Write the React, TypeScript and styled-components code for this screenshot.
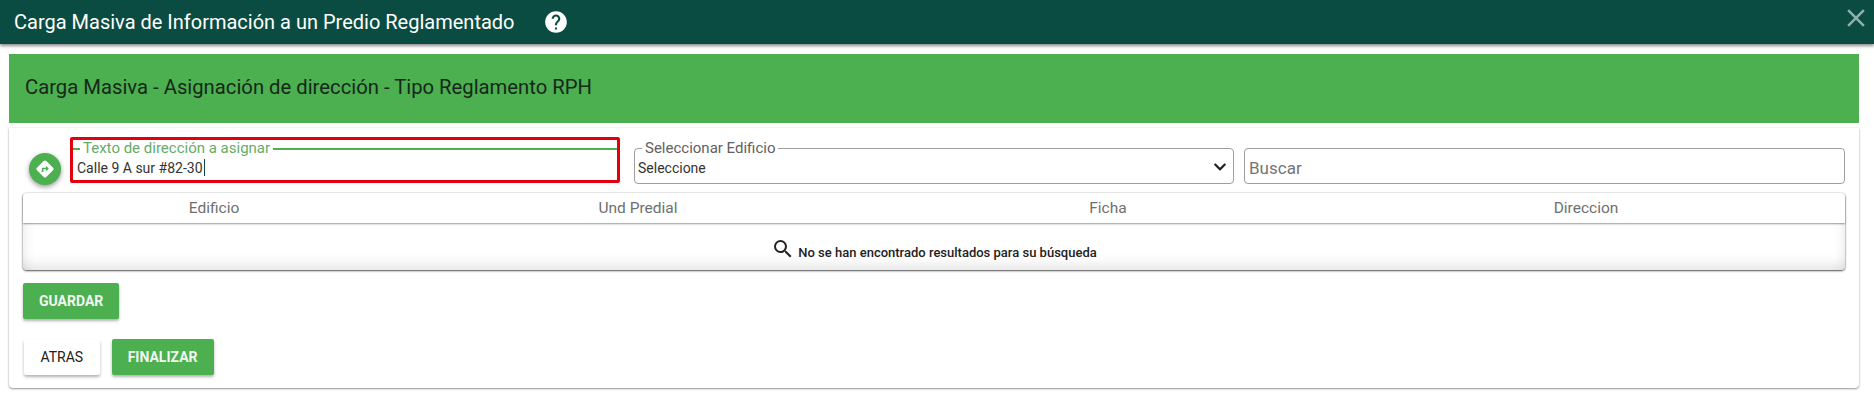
import React from 'react';
import styled, { createGlobalStyle } from 'styled-components';
import { MdClose, MdHelp, MdSearch } from 'react-icons/md';
import { FaChevronDown } from 'react-icons/fa';

const GlobalStyle = createGlobalStyle`
  html, body {
    margin: 0;
    padding: 0;
    background: #fff;
    font-family: Roboto, "Liberation Sans", sans-serif;
  }
`;

const Page = styled.div`
  width: 1874px;
  height: 405px;
  overflow: hidden;
  background: #fff;
`;

const TopBar = styled.header`
  height: 44px;
  background: #0b4c42;
  color: #fff;
  display: flex;
  align-items: center;
  padding: 0 0 0 14px;
  box-shadow: 0 2px 3px rgba(0, 0, 0, 0.45);
  position: relative;
`;

const TopTitle = styled.h1`
  margin: 0;
  font-size: 20px;
  font-weight: 400;
`;

const HelpButton = styled.span`
  display: flex;
  margin-left: 28px;
  font-size: 26px;
`;

const CloseButton = styled.span`
  display: flex;
  margin-left: auto;
  margin-right: 3px;
  margin-top: -9px;
  font-size: 30px;
  color: #8fb0aa;
`;

const Content = styled.main`
  margin: 10px 15px 0 9px;
`;

const Banner = styled.div`
  height: 69px;
  box-sizing: border-box;
  background: #4caf50;
  color: #16281a;
  display: flex;
  align-items: center;
  padding: 0 0 4px 16px;
  font-size: 20.25px;
`;

const Card = styled.section`
  margin-top: 5px;
  height: 260px;
  box-sizing: border-box;
  padding: 0 14px;
  border-radius: 0 0 4px 4px;
  box-shadow: 0 1px 2px rgba(0, 0, 0, 0.4), 0 0 2px rgba(0, 0, 0, 0.1);
  background: #fff;
`;

const FilterRow = styled.div`
  display: flex;
  align-items: flex-end;
  height: 57px;
`;

const RouteIcon = styled.span`
  width: 32px;
  height: 32px;
  flex: none;
  margin: 0 9px 0 6px;
  border-radius: 50%;
  background: #4caf50;
  display: flex;
  align-items: center;
  justify-content: center;
  box-shadow: 0 2px 5px rgba(0, 0, 0, 0.4);
`;

const Highlight = styled.div`
  width: 550px;
  height: 46px;
  flex: none;
  box-sizing: border-box;
  border: 3px solid #e2000f;
  border-radius: 2px;
  margin-bottom: 2px;
  padding-top: 1px;
`;

const Field = styled.fieldset<{ $active?: boolean; $width?: number }>`
  margin: 0;
  box-sizing: border-box;
  width: ${(p) => (p.$width ? `${p.$width}px` : 'auto')};
  border: 1px solid #9e9e9e;
  border-radius: 4px;
  padding: 0 3px;
  height: 43px;
  ${(p) =>
    p.$active &&
    `
    border: none;
    border-top: 2px solid #4caf50;
    border-radius: 0;
    height: 40px;
    padding-left: 4px;
  `}
`;

const FieldLegend = styled.legend<{ $active?: boolean }>`
  padding: 0 3px;
  margin-left: ${(p) => (p.$active ? '3px' : '4px')};
  font-size: 15px;
  line-height: 15px;
  color: ${(p) => (p.$active ? '#66ab69' : '#616161')};
`;

const FieldValue = styled.div`
  font-size: 14px;
  line-height: 20px;
  padding-top: 2px;
  color: #333;
  display: flex;
  align-items: center;
  justify-content: space-between;
`;

const SelectArrow = styled(FaChevronDown)`
  margin-right: 3px;
  margin-top: -3px;
  color: #212121;
`;

const Caret = styled.i`
  display: inline-block;
  width: 1px;
  height: 17px;
  margin-left: 1px;
  vertical-align: -3px;
  background: #0b4c42;
`;

const SelectBox = styled.div`
  margin: 0 0 1px 14px;
  flex: none;
`;

const SearchBox = styled.div`
  margin: 0 0 1px 10px;
  width: 601px;
  height: 36px;
  box-sizing: border-box;
  border: 1px solid #9e9e9e;
  border-radius: 4px;
  padding: 3px 4px 0;
  display: flex;
  align-items: center;
  font-size: 17px;
  color: #757575;
`;

const ResultTable = styled.div`
  margin-top: 8px;
  width: 1822px;
  border-radius: 4px;
  box-shadow: 0 1px 2px rgba(0, 0, 0, 0.65), 0 0 2px rgba(0, 0, 0, 0.2);
`;

const HeaderRow = styled.div`
  height: 30px;
  display: grid;
  grid-template-columns: 382px 466px 474px 500px;
  align-items: center;
  box-shadow: 0 1px 2px rgba(0, 0, 0, 0.4);
  position: relative;
  background: #fff;
  border-radius: 4px 4px 0 0;
`;

const HeaderCell = styled.div`
  font-size: 15.5px;
  text-align: center;
  color: #6f6f6f;

  &:last-child {
    padding-right: 18px;
  }
`;

const EmptyRow = styled.div`
  height: 47px;
  box-sizing: border-box;
  padding-top: 4px;
  display: flex;
  align-items: center;
  justify-content: center;
  gap: 3px;
  font-size: 13px;
  font-weight: 500;
  color: #222;
  background: #fff;
  border-radius: 0 0 4px 4px;
  box-shadow: inset 0 -14px 14px -10px rgba(0, 0, 0, 0.12), inset 12px 0 14px -12px rgba(0, 0, 0, 0.1),
    inset -12px 0 14px -12px rgba(0, 0, 0, 0.1);
`;

const EmptyText = styled.span`
  margin-top: 8px;
`;

const ActionRow = styled.div<{ $top: number }>`
  display: flex;
  gap: 12px;
  margin-top: ${(p) => p.$top}px;
`;

const Button = styled.button<{ $light?: boolean }>`
  height: 36px;
  border: none;
  border-radius: 2px;
  padding: 0 ${(p) => (p.$light ? '16.5px' : '16px')};
  margin-left: ${(p) => (p.$light ? '1px' : '0')};
  font-family: inherit;
  font-size: 14px;
  font-weight: ${(p) => (p.$light ? 400 : 700)};
  color: ${(p) => (p.$light ? '#212121' : '#f1f8f1')};
  background: ${(p) => (p.$light ? '#fff' : '#4caf50')};
  box-shadow: 0 2px 3px rgba(0, 0, 0, 0.3);
`;

const DirectionIcon = () => (
  <svg width="22" height="22" viewBox="0 0 24 24" aria-hidden="true">
    <path
      fill="#fff"
      d="M12 2.6c-.5 0-1 .2-1.4.6l-7.4 7.4c-.8.8-.8 2 0 2.8l7.4 7.4c.8.8 2 .8 2.8 0l7.4-7.4c.8-.8.8-2 0-2.8l-7.4-7.4c-.4-.4-.9-.6-1.4-.6z"
    />
    <path fill="#4caf50" d="M13 8.5v2.2H10c-.9 0-1.5.6-1.5 1.5v3h1.8v-2.8H13v2.2l3.2-3.1z" />
  </svg>
);

const columns = ['Edificio', 'Und Predial', 'Ficha', 'Direccion'];

export default function App() {
  return (
    <Page>
      <GlobalStyle />
      <TopBar>
        <TopTitle>Carga Masiva de Información a un Predio Reglamentado</TopTitle>
        <HelpButton>
          <MdHelp />
        </HelpButton>
        <CloseButton>
          <MdClose />
        </CloseButton>
      </TopBar>
      <Content>
        <Banner>Carga Masiva - Asignación de dirección - Tipo Reglamento RPH</Banner>
        <Card>
          <FilterRow>
            <RouteIcon>
              <DirectionIcon />
            </RouteIcon>
            <Highlight>
              <Field $active>
                <FieldLegend $active>Texto de dirección a asignar</FieldLegend>
                <FieldValue>
                  <span>
                    Calle 9 A sur #82-30
                    <Caret />
                  </span>
                </FieldValue>
              </Field>
            </Highlight>
            <SelectBox>
              <Field $width={600}>
                <FieldLegend>Seleccionar Edificio</FieldLegend>
                <FieldValue>
                  Seleccione
                  <SelectArrow size={14} />
                </FieldValue>
              </Field>
            </SelectBox>
            <SearchBox>Buscar</SearchBox>
          </FilterRow>
          <ResultTable>
            <HeaderRow>
              {columns.map((c) => (
                <HeaderCell key={c}>{c}</HeaderCell>
              ))}
            </HeaderRow>
            <EmptyRow>
              <MdSearch size={24} />
              <EmptyText>No se han encontrado resultados para su búsqueda</EmptyText>
            </EmptyRow>
          </ResultTable>
          <ActionRow $top={13}>
            <Button>GUARDAR</Button>
          </ActionRow>
          <ActionRow $top={20}>
            <Button $light>ATRAS</Button>
            <Button>FINALIZAR</Button>
          </ActionRow>
        </Card>
      </Content>
    </Page>
  );
}
